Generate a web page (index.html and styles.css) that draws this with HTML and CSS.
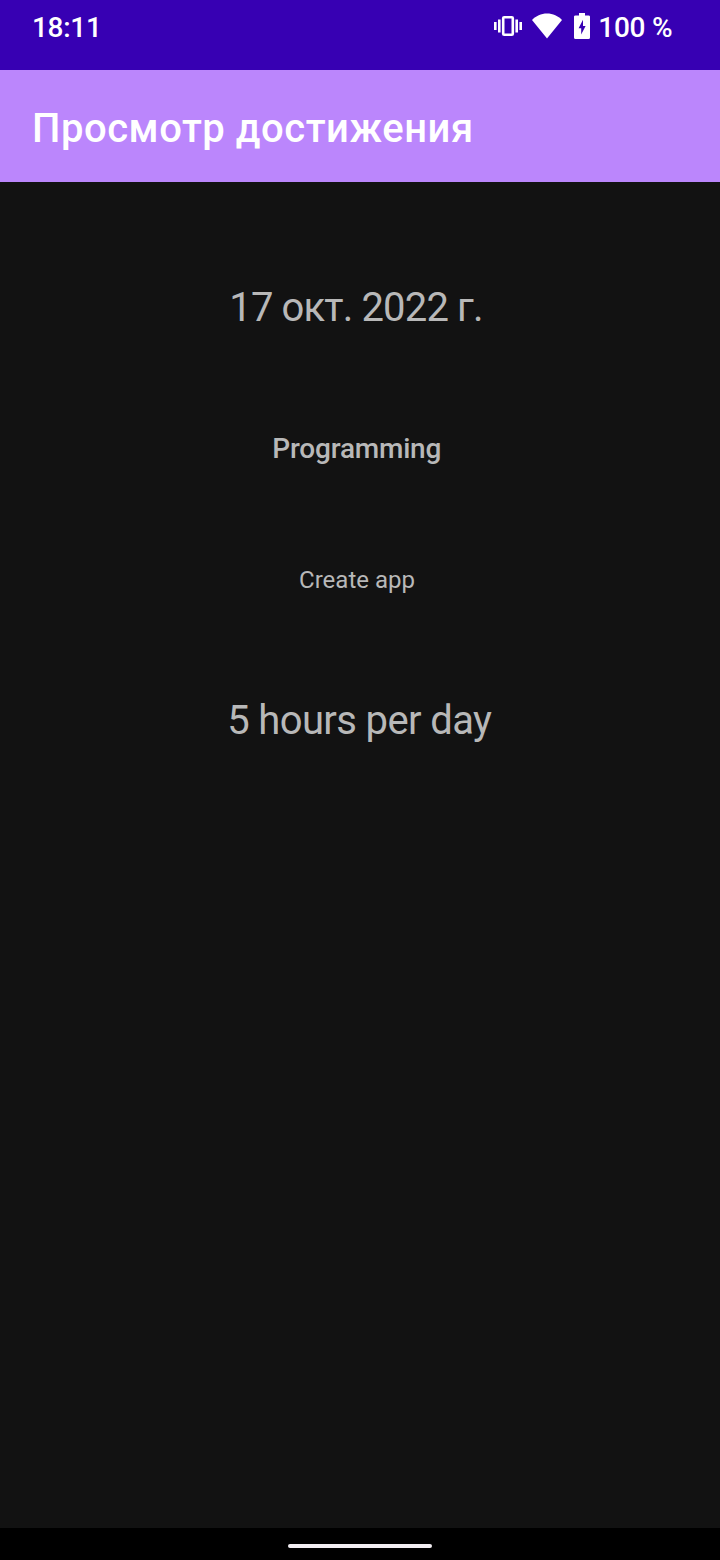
FILE: index.html
```html
<!DOCTYPE html>
<html lang="ru">
<head>
<meta charset="utf-8">
<title>Просмотр достижения</title>
<link rel="stylesheet" href="styles.css">
</head>
<body>
<div class="screen">
  <div class="status-bar">
    <span class="clock">18:11</span>
    <div class="status-icons">
      <svg class="vibrate" viewBox="0 0 28 22" width="28" height="22"><path fill="#fff" d="M0 7h2.600v8H0zM4 4.600h2.600v12.800H4zM21.400 4.600H24v12.800h-2.600zM25.400 7H28v8h-2.600z"/><rect x="9.200" y="2.200" width="9.600" height="17.600" rx="1" fill="none" stroke="#fff" stroke-width="2.600"/></svg>
      <svg class="wifi" viewBox="0 0 30 26" width="30" height="26"><path fill="#fff" d="M15 25.500 0 7C4 2.800 9 .4 15 .4s11 2.400 15 6.600z"/></svg>
      <svg class="battery" viewBox="0 0 16 26" width="16" height="26"><path fill="#fff" fill-rule="evenodd" d="M5 0h6v2.400h3.500A1.500 1.500 0 0 1 16 4v20.500a1.500 1.500 0 0 1-1.500 1.500h-13A1.500 1.500 0 0 1 0 24.500V4a1.500 1.500 0 0 1 1.500-1.600H5zM9 6.800 4.600 15.200h2.600V21.500L11.600 13H9z"/></svg>
    </div>
    <span class="battery-level">100 %</span>
  </div>
  <header class="app-bar"><h1 class="title">Просмотр достижения</h1></header>
  <main class="details">
    <p class="date">17 окт. 2022 г.</p>
    <p class="category">Programming</p>
    <p class="goal">Create app</p>
    <p class="effort">5 hours per day</p>
  </main>
  <div class="nav-bar"><div class="nav-handle"></div></div>
</div>
</body>
</html>
```

FILE: styles.css
```css
* { box-sizing: border-box; }
body { margin: 0; font-family: Roboto, "Noto Sans", sans-serif; }
.screen { width: 720px; height: 1560px; display: flex; flex-direction: column; background: #121212; color: #b8b8b8; }
.status-bar { height: 70px; background: #3700b3; color: #fff; display: flex; align-items: flex-start; padding: 11px 47.500px 0 32px; font-size: 28px; font-weight: 500; line-height: 33px; }
.clock { margin-right: auto; letter-spacing: -0.3px; }
.battery-level { letter-spacing: -0.2px; }
.status-icons { display: flex; align-items: center; margin: 2px 8.500px 0 0; }
.status-icons svg { display: block; }
.vibrate { margin-right: 10px; }
.wifi { margin-right: 12px; }
.app-bar { height: 112px; background: #bb86fc; display: flex; align-items: center; padding: 5px 32px 0; }
.title { margin: 0; color: #fff; font-size: 40px; font-weight: 500; line-height: 47px; letter-spacing: 0.53px; white-space: nowrap; }
.details { flex: 1; display: flex; flex-direction: column; align-items: center; padding-top: 102px; }
.details p { margin: 0; white-space: nowrap; }
.details .date { font-size: 40px; line-height: 48px; padding-right: 8px; letter-spacing: -0.85px; }
.details .category { font-size: 28px; line-height: 34px; font-weight: 500; padding-right: 6.500px; margin-top: 100px; letter-spacing: -0.2px; }
.details .goal { font-size: 24px; line-height: 28px; padding-right: 6px; margin-top: 100px; }
.details .effort { font-size: 40px; line-height: 48px; margin-top: 103px; padding-right: 1.500px; letter-spacing: -0.62px; }
.nav-bar { height: 32px; background: #000; display: flex; justify-content: center; padding-top: 16px; }
.nav-handle { width: 144px; height: 4px; border-radius: 2px; background: #f2eef2; }
```
